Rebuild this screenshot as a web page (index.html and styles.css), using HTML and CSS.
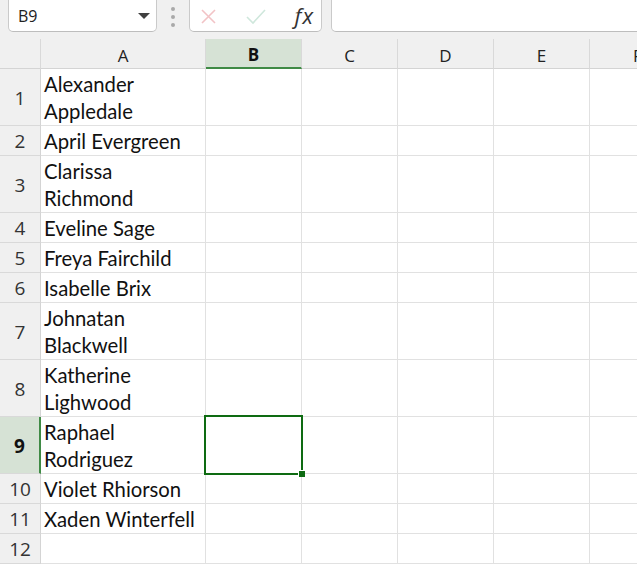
FILE: index.html
```html
<!DOCTYPE html>
<html lang="en">
<head>
    <meta charset="UTF-8">
    <meta name="viewport" content="width=device-width, initial-scale=1.0">
    <title>Sheet1</title>
    <link rel="stylesheet" href="styles.css">
</head>
<body>
    <div class="toolbar">
        <div class="namebox">
            <span>B9</span>
            <svg class="caret" width="12" height="6" viewBox="0 0 12 6"><path d="M0 0h12L6 6z" fill="#404040"/></svg>
        </div>
        <div class="grip"><i></i><i></i><i></i></div>
        <div class="fxbox">
            <svg width="17" height="17" viewBox="0 0 17 17"><path d="M2 2l13 13M15 2L2 15" stroke="#f2c3c6" stroke-width="1.6" fill="none"/></svg>
            <svg width="20" height="17" viewBox="0 0 20 17"><path d="M1 9l6 6L19 2" stroke="#cfe7dc" stroke-width="1.6" fill="none"/></svg>
            <span class="fx">fx</span>
        </div>
        <div class="formula"></div>
    </div>

    <div class="sheet">
        <div class="row head">
            <div class="corner"></div>
            <div class="col">A</div>
            <div class="col on">B</div>
            <div class="col">C</div>
            <div class="col">D</div>
            <div class="col">E</div>
            <div class="col">F</div>
        </div>
        <div class="row tall">
            <div class="num">1</div><div class="cell">Alexander<br>Appledale</div>
            <div class="cell"></div><div class="cell"></div><div class="cell"></div><div class="cell"></div><div class="cell"></div>
        </div>
        <div class="row">
            <div class="num">2</div><div class="cell">April Evergreen</div>
            <div class="cell"></div><div class="cell"></div><div class="cell"></div><div class="cell"></div><div class="cell"></div>
        </div>
        <div class="row tall">
            <div class="num">3</div><div class="cell">Clarissa<br>Richmond</div>
            <div class="cell"></div><div class="cell"></div><div class="cell"></div><div class="cell"></div><div class="cell"></div>
        </div>
        <div class="row">
            <div class="num">4</div><div class="cell">Eveline Sage</div>
            <div class="cell"></div><div class="cell"></div><div class="cell"></div><div class="cell"></div><div class="cell"></div>
        </div>
        <div class="row">
            <div class="num">5</div><div class="cell">Freya Fairchild</div>
            <div class="cell"></div><div class="cell"></div><div class="cell"></div><div class="cell"></div><div class="cell"></div>
        </div>
        <div class="row">
            <div class="num">6</div><div class="cell">Isabelle Brix</div>
            <div class="cell"></div><div class="cell"></div><div class="cell"></div><div class="cell"></div><div class="cell"></div>
        </div>
        <div class="row tall">
            <div class="num">7</div><div class="cell">Johnatan<br>Blackwell</div>
            <div class="cell"></div><div class="cell"></div><div class="cell"></div><div class="cell"></div><div class="cell"></div>
        </div>
        <div class="row tall">
            <div class="num">8</div><div class="cell">Katherine<br>Lighwood</div>
            <div class="cell"></div><div class="cell"></div><div class="cell"></div><div class="cell"></div><div class="cell"></div>
        </div>
        <div class="row tall">
            <div class="num on">9</div><div class="cell">Raphael<br>Rodriguez</div>
            <div class="cell active"></div><div class="cell"></div><div class="cell"></div><div class="cell"></div><div class="cell"></div>
        </div>
        <div class="row">
            <div class="num">10</div><div class="cell">Violet Rhiorson</div>
            <div class="cell"></div><div class="cell"></div><div class="cell"></div><div class="cell"></div><div class="cell"></div>
        </div>
        <div class="row">
            <div class="num">11</div><div class="cell">Xaden Winterfell</div>
            <div class="cell"></div><div class="cell"></div><div class="cell"></div><div class="cell"></div><div class="cell"></div>
        </div>
        <div class="row">
            <div class="num">12</div><div class="cell"></div>
            <div class="cell"></div><div class="cell"></div><div class="cell"></div><div class="cell"></div><div class="cell"></div>
        </div>
    </div>
</body>
</html>
```

FILE: styles.css
```css
body {
    margin: 0;
    background-color: #fff;
    overflow: hidden;
    font-family: Lato, "Liberation Sans", sans-serif;
}

/* formula bar */
.toolbar {
    display: flex;
    height: 39px;
    box-sizing: border-box;
    padding: 0 0 7px 8px;
    background-color: #f0f0f0;
}
.namebox,
.fxbox,
.formula {
    margin-top: -6px;
    background-color: #fff;
    border: 1px solid #cacaca;
    border-bottom-color: #bdbdbd;
    border-radius: 5px;
    box-sizing: border-box;
}
.namebox {
    width: 149px;
    display: flex;
    align-items: center;
    justify-content: space-between;
    padding: 5px 5px 0 9px;
    font-family: "Open Sans", sans-serif;
    font-size: 16px;
    color: #222;
}
.caret {
    margin-right: 1px;
}
.grip {
    width: 32px;
    display: flex;
    flex-direction: column;
    align-items: center;
    gap: 4px;
    padding-top: 7px;
}
.grip i {
    width: 4px;
    height: 4px;
    border-radius: 50%;
    background-color: #a9a9a9;
}
.fxbox {
    width: 133px;
    display: flex;
    align-items: center;
    padding: 6px 7px 0 10px;
}
.fxbox svg + svg {
    margin-left: 29px;
}
.fx {
    margin-left: auto;
    font-family: "Open Sans", sans-serif;
    font-style: italic;
    font-size: 22px;
    letter-spacing: 1px;
    color: #333;
    margin-top: -3px;
}
.formula {
    flex: 1;
    margin-left: 9px;
    margin-right: -10px;
}

/* grid */
.row {
    display: grid;
    grid-template-columns: 41px 165px 96px 96px 96px 96px 96px;
    height: 30px;
}
.row.tall {
    height: 57px;
}
.row > div {
    box-sizing: border-box;
    border-right: 1px solid #e1e1e1;
    border-bottom: 1px solid #e1e1e1;
}
.head > div {
    background-color: #f0f0f0;
    border-right-color: #d9d9d9;
    border-bottom-color: #d4d4d4;
}
.col {
    display: flex;
    align-items: center;
    justify-content: center;
    padding-top: 3px;
    font-family: "Open Sans", sans-serif;
    font-size: 17px;
    color: #222;
}
.col.on {
    background-color: #d6e2d5;
    border-bottom: 2px solid #3f8a45;
    font-weight: bold;
    color: #111;
}
.num {
    display: flex;
    align-items: center;
    justify-content: center;
    padding-top: 1px;
    background-color: #f0f0f0;
    border-right-color: #d4d4d4 !important;
    border-bottom-color: #d9d9d9 !important;
    font-family: "Open Sans", sans-serif;
    font-size: 19px;
    color: #333;
}
.num.on {
    background-color: #d6e2d5;
    border-right: 2px solid #3f8a45 !important;
    font-weight: bold;
    color: #111;
}
.cell {
    display: flex;
    align-items: flex-end;
    padding: 0 0 0 3px;
    font-size: 20.3px;
    line-height: 27px;
    color: #111;
    white-space: nowrap;
}
.cell.active {
    position: relative;
}
.cell.active::before {
    content: "";
    position: absolute;
    top: -2px;
    left: -2px;
    right: -2px;
    bottom: -2px;
    border: 2px solid #0e6b12;
}
.cell.active::after {
    content: "";
    position: absolute;
    right: -4px;
    bottom: -4px;
    width: 6px;
    height: 6px;
    background-color: #0e6b12;
    border-left: 1px solid #fff;
    border-top: 1px solid #fff;
}
```
